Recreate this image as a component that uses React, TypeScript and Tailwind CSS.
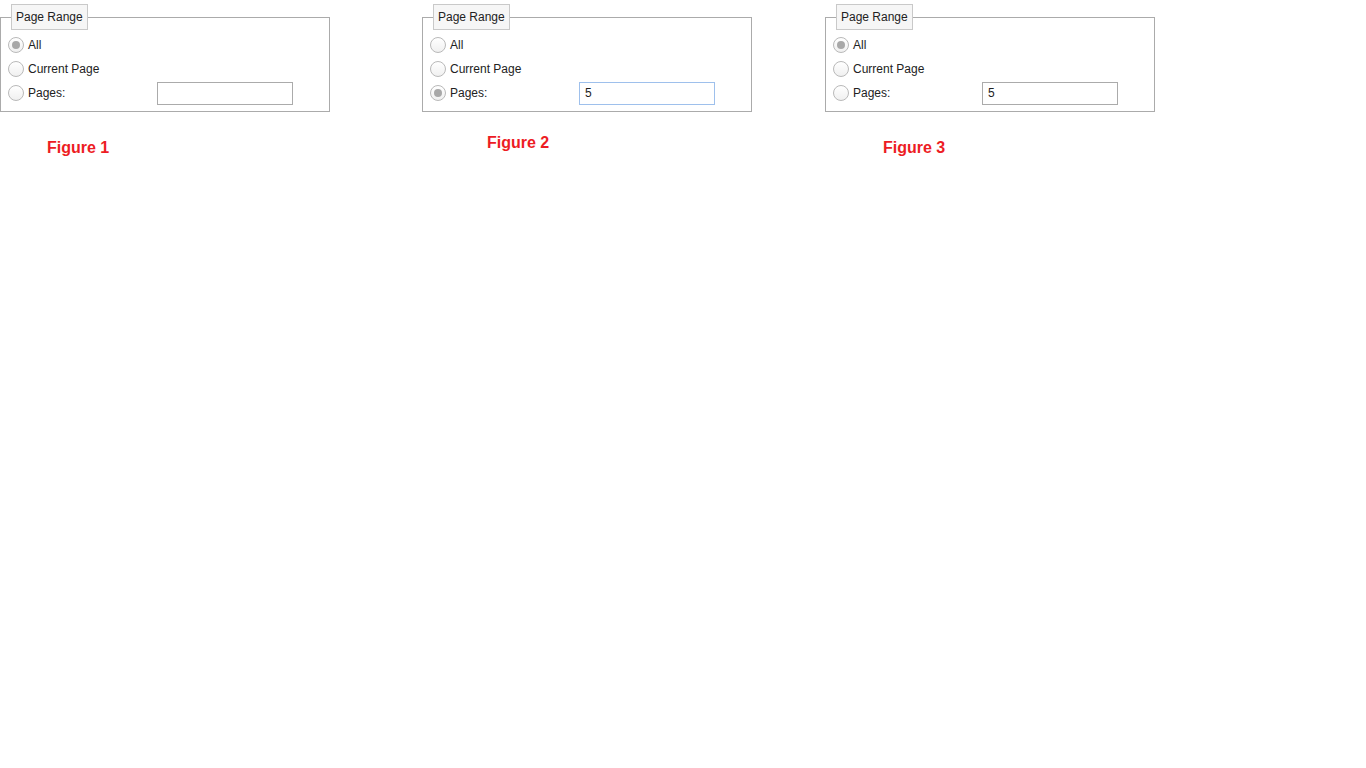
import React from "react";

type Choice = "all" | "current" | "pages";

const Radio = ({ checked }: { checked: boolean }) => (
  <span className="flex h-[16px] w-[16px] shrink-0 items-center justify-center rounded-full border border-[#b9b9b9] bg-gradient-to-b from-white to-[#f0f0f0]">
    {checked && <span className="h-[8px] w-[8px] rounded-full bg-[#a8a8a8]" />}
  </span>
);

const Option = ({ label, checked }: { label: string; checked: boolean }) => (
  <div className="flex items-center gap-[4px]">
    <Radio checked={checked} />
    <span>{label}</span>
  </div>
);

const PageRange = ({
  choice,
  pages,
  focused,
}: {
  choice: Choice;
  pages: string;
  focused?: boolean;
}) => (
  <fieldset className="m-0 w-[330px] border border-[#ababab] pt-[3px] pr-0 pb-[6px] pl-[7px] text-[12px] text-[#222]">
    <legend className="ml-[3px] h-[26px] border border-[#c9c9c9] bg-[#f6f6f6] px-[4px] leading-[24px] text-[#222]">
      Page Range
    </legend>
    <div className="flex h-[24px] items-center">
      <Option label="All" checked={choice === "all"} />
    </div>
    <div className="flex h-[24px] items-center">
      <Option label="Current Page" checked={choice === "current"} />
    </div>
    <div className="flex h-[24px] items-center">
      <div className="w-[149px]">
        <Option label="Pages:" checked={choice === "pages"} />
      </div>
      <input
        readOnly
        value={pages}
        className={`h-[23px] w-[136px] border bg-white px-[5px] text-[12px] text-[#222] outline-none ${
          focused ? "border-[#9ec0ec]" : "border-[#ababab]"
        }`}
      />
    </div>
  </fieldset>
);

const Caption = ({ text, className }: { text: string; className: string }) => (
  <div
    className={`text-[16px] leading-[18px] font-bold text-[#ed1c24] ${className}`}
  >
    {text}
  </div>
);

export default function App() {
  return (
    <div
      className="min-h-screen bg-white pt-[4px]"
      style={{ fontFamily: '"Liberation Sans", Arial, sans-serif' }}
    >
      <div className="flex items-start">
        {/* Figure 1 */}
        <div className="flex w-[330px] flex-col">
          <PageRange choice="all" pages="" />
          <Caption text="Figure 1" className="mt-[27px] ml-[47px]" />
        </div>

        {/* Figure 2 */}
        <div className="ml-[92px] flex w-[330px] flex-col">
          <PageRange choice="pages" pages="5" focused />
          <Caption text="Figure 2" className="mt-[22px] ml-[65px]" />
        </div>

        {/* Figure 3 */}
        <div className="ml-[73px] flex w-[330px] flex-col">
          <PageRange choice="all" pages="5" />
          <Caption text="Figure 3" className="mt-[27px] ml-[58px]" />
        </div>
      </div>
    </div>
  );
}
